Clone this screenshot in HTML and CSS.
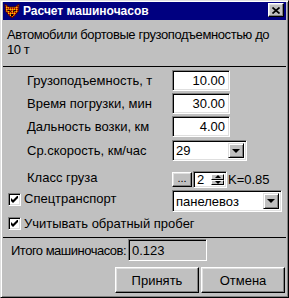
FILE: index.html
```html
<!DOCTYPE html>
<html>
<head>
<meta charset="UTF-8">
<title>Расчет машиночасов</title>
<link rel="stylesheet" href="styles.css">
</head>
<body>
<div class="window">
    <div class="titlebar">
        <svg class="app-icon" width="16" height="16" viewBox="0 0 16 16">
            <defs>
                <pattern id="chk" width="2" height="2" patternUnits="userSpaceOnUse">
                    <rect width="2" height="2" fill="#e06000"/>
                    <rect width="1" height="1" fill="#ffc000"/>
                    <rect x="1" y="1" width="1" height="1" fill="#a00000"/>
                </pattern>
            </defs>
            <path d="M1 1 L5 4 L11 4 L15 1 L14.5 8 L11 12.5 L8 15 L5 12.5 L1.5 8 Z" fill="url(#chk)" stroke="#500000" stroke-width="1"/>
            <path d="M4 7 L7 8.5 M12 7 L9 8.5" stroke="#000" stroke-width="1.2"/>
            <rect x="7" y="11" width="2" height="2" fill="#000"/>
        </svg>
        <span class="title">Расчет машиночасов</span>
        <span class="close">
            <svg width="8" height="7" viewBox="0 0 8 7"><path d="M0.5 0.5 L7.5 6.5 M7.5 0.5 L0.5 6.5" stroke="#000" stroke-width="1.7"/></svg>
        </span>
    </div>

    <div class="body">
        <p class="desc">Автомобили бортовые грузоподъемностью до 10 т</p>
        <hr class="sep">

        <div class="form">
            <div class="row">
                <span class="label">Грузоподъемность, т</span>
                <span class="field num">10.00</span>
            </div>
            <div class="row">
                <span class="label">Время погрузки, мин</span>
                <span class="field num">30.00</span>
            </div>
            <div class="row">
                <span class="label">Дальность возки, км</span>
                <span class="field num">4.00</span>
            </div>
            <div class="row row-speed">
                <span class="label">Ср.скорость, км/час</span>
                <span class="field combo">29<span class="combo-btn"><i class="down"></i></span></span>
            </div>
            <div class="row row-class">
                <span class="label">Класс груза</span>
                <span class="btn-small">...</span>
                <span class="field spin">
                    <span class="spin-val">2</span>
                    <span class="spin-btns">
                        <span class="spin-btn"><i class="up-sm"></i></span>
                        <span class="spin-btn"><i class="down-sm"></i></span>
                    </span>
                </span>
                <span class="k">K=0.85</span>
            </div>
            <div class="row row-check">
                <span class="check-label">
                    <span class="checkbox"><svg width="7" height="7" viewBox="0 0 7 7"><polygon points="0,2 2,4 7,-1 7,2 2,7 0,5" fill="#000"/></svg></span>
                    <span class="check-text">Спецтранспорт</span>
                </span>
                <span class="field combo combo-wide">панелевоз<span class="combo-btn"><i class="down"></i></span></span>
            </div>
            <div class="row row-check2">
                <span class="check-label">
                    <span class="checkbox"><svg width="7" height="7" viewBox="0 0 7 7"><polygon points="0,2 2,4 7,-1 7,2 2,7 0,5" fill="#000"/></svg></span>
                    <span class="check-text">Учитывать обратный пробег</span>
                </span>
            </div>
        </div>

        <hr class="sep sep-bottom">

        <div class="total">
            <span class="total-label">Итого машиночасов:</span>
            <span class="field readonly">0.123</span>
        </div>

        <div class="buttons">
            <button class="btn">Принять</button>
            <button class="btn">Отмена</button>
        </div>
    </div>
</div>
</body>
</html>
```

FILE: styles.css
```css
* {
    box-sizing: border-box;
    margin: 0;
    padding: 0;
}

body {
    font-family: "Liberation Sans", Arial, sans-serif;
    font-size: 13px;
    line-height: 15px;
    color: #000;
    background-color: #c0c0c0;
}

.window {
    width: 289px;
    height: 298px;
    background-color: #c0c0c0;
    border: 1px solid;
    border-color: #dfdfdf #000 #000 #dfdfdf;
    box-shadow: inset 1px 1px 0 #fff, inset -1px -1px 0 #808080;
    padding: 1px 2px 2px 2px;
    display: flex;
    flex-direction: column;
}

/* заголовок окна */
.titlebar {
    height: 18px;
    background-color: #000080;
    color: #fff;
    display: flex;
    align-items: center;
    padding: 0 2px 0 1px;
}

.app-icon {
    margin-right: 3px;
    flex: none;
}

.title {
    font-weight: bold;
    font-size: 12px;
}

.close {
    margin-left: auto;
    align-self: flex-start;
    margin-top: 1px;
    width: 16px;
    height: 14px;
    background-color: #c0c0c0;
    border: 1px solid;
    border-color: #fff #000 #000 #fff;
    box-shadow: inset -1px -1px 0 #808080, inset 1px 1px 0 #dfdfdf;
    display: flex;
    justify-content: center;
    align-items: center;
}

.body {
    flex: 1;
    display: flex;
    flex-direction: column;
}

.desc {
    margin: 7px 4px 0 4px;
    height: 30px;
    letter-spacing: -0.4px;
}

.sep {
    border: none;
    border-top: 1px solid #000;
    margin-top: 9px;
}

.sep-bottom {
    margin-top: 6px;
}

/* поля формы */
.form {
    display: flex;
    flex-direction: column;
    margin-top: 3px;
    padding-left: 5px;
}

.row {
    display: flex;
    align-items: center;
    height: 21px;
    margin-top: 2px;
}

.row:first-child {
    margin-top: 0;
}

.label {
    width: 164px;
    padding-left: 19px;
    white-space: nowrap;
}

.field {
    height: 21px;
    background-color: #fff;
    border: 1px solid;
    border-color: #808080 #fff #fff #808080;
    box-shadow: inset 1px 1px 0 #000, inset -1px -1px 0 #dfdfdf;
    display: flex;
    align-items: center;
    padding: 0 4px;
    white-space: nowrap;
}

.num {
    width: 58px;
    justify-content: flex-end;
}

.combo {
    width: 75px;
    padding: 2px 2px 2px 3px;
    justify-content: space-between;
}

.combo-btn {
    width: 16px;
    height: 100%;
    background-color: #c0c0c0;
    border: 1px solid;
    border-color: #dfdfdf #000 #000 #dfdfdf;
    box-shadow: inset 1px 1px 0 #fff, inset -1px -1px 0 #808080;
    display: flex;
    justify-content: center;
    align-items: center;
}

.down {
    border-left: 4px solid transparent;
    border-right: 4px solid transparent;
    border-top: 4px solid #000;
}

.row-speed {
    margin-top: 3px;
}

.row-class {
    height: 17px;
    margin-top: 10px;
}

.row-class .label {
    align-self: flex-start;
    margin-top: -1px;
}

.btn-small {
    width: 20px;
    height: 15px;
    background-color: #c0c0c0;
    border: 1px solid;
    border-color: #fff #000 #000 #fff;
    box-shadow: inset -1px -1px 0 #808080, inset 1px 1px 0 #dfdfdf;
    font-size: 11px;
    line-height: 10px;
    text-align: center;
}

.spin {
    width: 34px;
    height: 17px;
    margin-left: 1px;
    padding: 2px 2px 2px 3px;
}

.spin-val {
    flex: 1;
}

.spin-btns {
    width: 13px;
    height: 100%;
    display: flex;
    flex-direction: column;
}

.spin-btn {
    flex: 1;
    background-color: #c0c0c0;
    border: 1px solid;
    border-color: #fff #000 #000 #fff;
    display: flex;
    justify-content: center;
    align-items: center;
}

.up-sm {
    border-left: 3px solid transparent;
    border-right: 3px solid transparent;
    border-bottom: 3px solid #000;
}

.down-sm {
    border-left: 3px solid transparent;
    border-right: 3px solid transparent;
    border-top: 3px solid #000;
}

.k {
    margin-left: 1px;
}

.row-check {
    height: 22px;
    margin-top: 2px;
    align-items: flex-start;
}

.check-label {
    width: 164px;
    display: flex;
    align-items: flex-start;
    white-space: nowrap;
}

.checkbox {
    width: 13px;
    height: 13px;
    flex: none;
    background-color: #fff;
    border: 1px solid;
    border-color: #808080 #fff #fff #808080;
    box-shadow: inset 1px 1px 0 #000, inset -1px -1px 0 #dfdfdf;
    display: flex;
    justify-content: center;
    align-items: center;
    margin-top: 3px;
}

.check-text {
    margin-left: 3px;
    margin-top: 1px;
}

.combo-wide {
    width: 110px;
    height: 22px;
}

.row-check2 {
    height: 15px;
    margin-top: 4px;
}

.row-check2 .checkbox,
.row-check2 .check-text {
    margin-top: 0;
}

.row-check2 .check-label {
    align-items: center;
}

/* итог и кнопки */
.total {
    display: flex;
    align-items: center;
    height: 22px;
    margin-top: 1px;
    padding-left: 8px;
}

.total-label {
    width: 117px;
    white-space: nowrap;
    letter-spacing: -0.5px;
}

.readonly {
    width: 79px;
    height: 22px;
    background-color: #c0c0c0;
    box-shadow: inset 1px 1px 0 #000;
    padding-left: 3px;
}

.buttons {
    display: flex;
    justify-content: flex-end;
    gap: 2px;
    margin-top: 6px;
    padding-right: 1px;
}

.btn {
    width: 84px;
    height: 26px;
    font: inherit;
    color: #000;
    background-color: #c0c0c0;
    border: 1px solid;
    border-color: #fff #000 #000 #fff;
    box-shadow: inset -1px -1px 0 #808080, inset 1px 1px 0 #dfdfdf;
}
```
